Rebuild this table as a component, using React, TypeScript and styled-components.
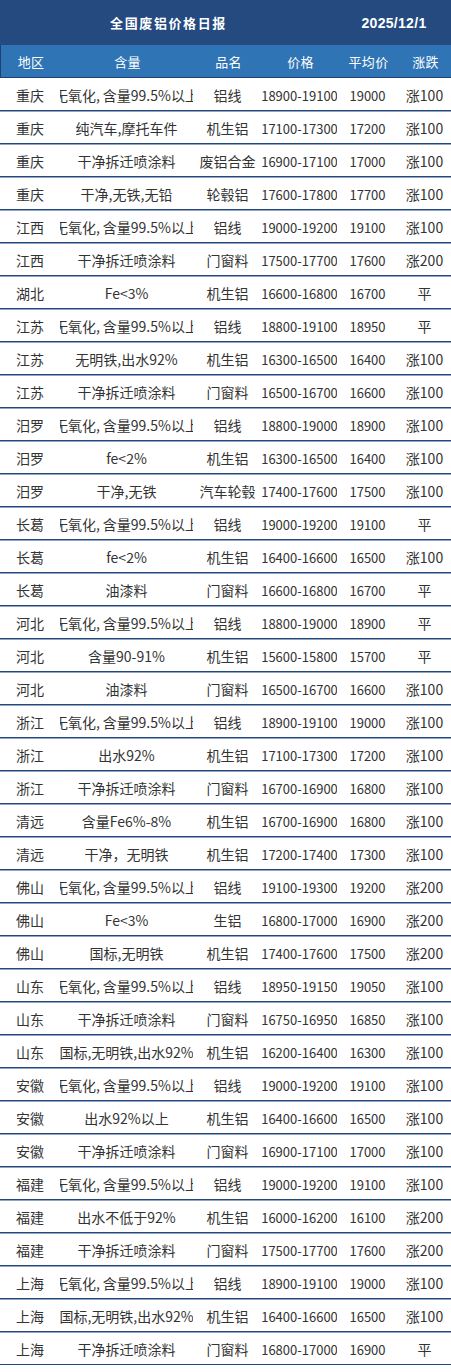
import styled, { createGlobalStyle } from "styled-components";

const GlobalStyle = createGlobalStyle`
  html, body {
    margin: 0;
    padding: 0;
    background: #ffffff;
  }
  body {
    font-family: "Noto Sans CJK SC", "Noto Sans", sans-serif;
  }
`;

const COLS = "60px 133px 69px 75px 61px 53px";

const Table = styled.div`
  width: 451px;
  display: flex;
  flex-direction: column;
`;

const TitleBar = styled.div`
  height: 45px;
  display: grid;
  grid-template-columns: 337px 114px;
  align-items: center;
  background: #244a80;
  color: #ffffff;
  font-weight: 700;
`;

const Title = styled.div`
  text-align: center;
  font-size: 13px;
  letter-spacing: 1.6px;
`;

const DateText = styled.div`
  text-align: center;
  font-size: 14px;
  font-family: "Liberation Sans", "Noto Sans", sans-serif;
  letter-spacing: 0.3px;
`;

const HeadRow = styled.div`
  height: 32px;
  display: grid;
  grid-template-columns: ${COLS};
  align-items: center;
  background: #2f74b5;
  border-bottom: 1px solid #1f3f75;
  border-left: 1px solid #1f3f75;
  color: #ffffff;
  font-size: 13px;
`;

const HeadCell = styled.div`
  text-align: center;
  letter-spacing: 0.3px;
`;

const Row = styled.div`
  height: 32px;
  display: grid;
  grid-template-columns: ${COLS};
  align-items: center;
  border-bottom: 1px solid #24477f;
  box-shadow: 0 0.5px 0 #24477f;
  color: #333333;
  font-size: 14px;
`;

const Cell = styled.div<{ $num?: boolean }>`
  display: flex;
  justify-content: center;
  white-space: nowrap;
  overflow: hidden;
  padding-top: 2px;
  font-size: ${(p) => (p.$num ? "13px" : "14px")};
`;

type Item = [string, string, string, string, string, string];

// 无氧化 description, shared by many rows
const PURE = "无氧化,\u2009含量99.5%以上";

const rows: Item[] = [
  ["重庆", PURE, "铝线", "18900-19100", "19000", "涨100"],
  ["重庆", "纯汽车,摩托车件", "机生铝", "17100-17300", "17200", "涨100"],
  ["重庆", "干净拆迁喷涂料", "废铝合金", "16900-17100", "17000", "涨100"],
  ["重庆", "干净,无铁,无铅", "轮毂铝", "17600-17800", "17700", "涨100"],
  ["江西", PURE, "铝线", "19000-19200", "19100", "涨100"],
  ["江西", "干净拆迁喷涂料", "门窗料", "17500-17700", "17600", "涨200"],
  ["湖北", "Fe<3%", "机生铝", "16600-16800", "16700", "平"],
  ["江苏", PURE, "铝线", "18800-19100", "18950", "平"],
  ["江苏", "无明铁,出水92%", "机生铝", "16300-16500", "16400", "涨100"],
  ["江苏", "干净拆迁喷涂料", "门窗料", "16500-16700", "16600", "涨100"],
  ["汨罗", PURE, "铝线", "18800-19000", "18900", "涨100"],
  ["汨罗", "fe<2%", "机生铝", "16300-16500", "16400", "涨100"],
  ["汨罗", "干净,无铁", "汽车轮毂", "17400-17600", "17500", "涨100"],
  ["长葛", PURE, "铝线", "19000-19200", "19100", "平"],
  ["长葛", "fe<2%", "机生铝", "16400-16600", "16500", "涨100"],
  ["长葛", "油漆料", "门窗料", "16600-16800", "16700", "平"],
  ["河北", PURE, "铝线", "18800-19000", "18900", "平"],
  ["河北", "含量90-91%", "机生铝", "15600-15800", "15700", "平"],
  ["河北", "油漆料", "门窗料", "16500-16700", "16600", "涨100"],
  ["浙江", PURE, "铝线", "18900-19100", "19000", "涨100"],
  ["浙江", "出水92%", "机生铝", "17100-17300", "17200", "涨100"],
  ["浙江", "干净拆迁喷涂料", "门窗料", "16700-16900", "16800", "涨100"],
  ["清远", "含量Fe6%-8%", "机生铝", "16700-16900", "16800", "涨100"],
  ["清远", "干净，无明铁", "机生铝", "17200-17400", "17300", "涨100"],
  ["佛山", PURE, "铝线", "19100-19300", "19200", "涨200"],
  ["佛山", "Fe<3%", "生铝", "16800-17000", "16900", "涨200"],
  ["佛山", "国标,无明铁", "机生铝", "17400-17600", "17500", "涨200"],
  ["山东", PURE, "铝线", "18950-19150", "19050", "涨100"],
  ["山东", "干净拆迁喷涂料", "门窗料", "16750-16950", "16850", "涨100"],
  ["山东", "国标,无明铁,出水92%", "机生铝", "16200-16400", "16300", "涨100"],
  ["安徽", PURE, "铝线", "19000-19200", "19100", "涨100"],
  ["安徽", "出水92%以上", "机生铝", "16400-16600", "16500", "涨100"],
  ["安徽", "干净拆迁喷涂料", "门窗料", "16900-17100", "17000", "涨100"],
  ["福建", PURE, "铝线", "19000-19200", "19100", "涨100"],
  ["福建", "出水不低于92%", "机生铝", "16000-16200", "16100", "涨200"],
  ["福建", "干净拆迁喷涂料", "门窗料", "17500-17700", "17600", "涨200"],
  ["上海", PURE, "铝线", "18900-19100", "19000", "涨100"],
  ["上海", "国标,无明铁,出水92%", "机生铝", "16400-16600", "16500", "涨100"],
  ["上海", "干净拆迁喷涂料", "门窗料", "16800-17000", "16900", "平"],
];

const heads = ["地区", "含量", "品名", "价格", "平均价", "涨跌"];

function App() {
  return (
    <>
      <GlobalStyle />
      <Table>
        <TitleBar>
          <Title>全国废铝价格日报</Title>
          <DateText>2025/12/1</DateText>
        </TitleBar>
        <HeadRow>
          {heads.map((h) => (
            <HeadCell key={h}>{h}</HeadCell>
          ))}
        </HeadRow>
        {rows.map((r, i) => (
          <Row key={i}>
            <Cell>{r[0]}</Cell>
            <Cell>{r[1]}</Cell>
            <Cell>{r[2]}</Cell>
            <Cell $num>{r[3]}</Cell>
            <Cell $num>{r[4]}</Cell>
            <Cell>{r[5]}</Cell>
          </Row>
        ))}
      </Table>
    </>
  );
}

export default App;
